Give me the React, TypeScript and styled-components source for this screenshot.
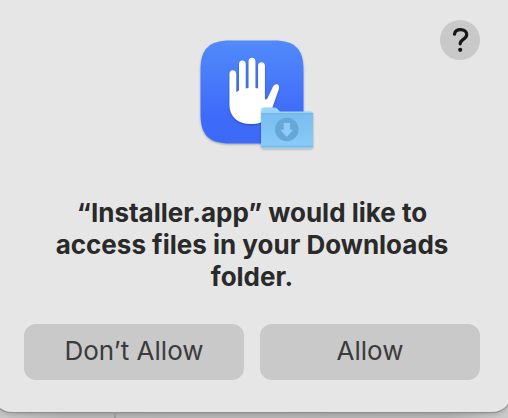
import React from "react";
import styled, { createGlobalStyle } from "styled-components";

const GlobalStyle = createGlobalStyle`
  * { box-sizing: border-box; }
  html, body, #root { height: 100%; }
  body {
    margin: 0;
    background: #b4b4b4;
    font-family: Inter, "Liberation Sans", sans-serif;
    overflow: hidden;
  }
`;

const Desktop = styled.main`
  display: flex;
  flex-direction: column;
  min-height: 100%;
  background: linear-gradient(90deg, #c6c6c6 0, #b6b6b6 60px, #b4b4b4 calc(100% - 60px), #cacaca 100%);
`;

const Dialog = styled.section`
  display: flex;
  flex-direction: column;
  margin: 0 -4px 0 -8px;
  padding: 20px 32px 32px;
  border-radius: 0 0 20px 20px;
  background: #e6e6e6;
  box-shadow: 0 0 0 1px #8e8e8e, 0 2px 4px rgba(0, 0, 0, 0.18);
`;

const Header = styled.header`
  display: grid;
  grid-template-columns: 1fr auto 1fr;
  align-items: start;
`;

const AppIcon = styled.svg`
  grid-column: 2;
  display: block;
  width: 120px;
  height: 120px;
  margin-top: 16px;
  overflow: visible;
`;

const HelpButton = styled.button`
  grid-column: 3;
  justify-self: end;
  display: flex;
  align-items: center;
  justify-content: center;
  width: 40px;
  height: 40px;
  padding: 0;
  border: 0;
  border-radius: 50%;
  background: #c9c9c9;
`;

const Message = styled.h1`
  margin: 41px 20px 31px;
  color: #2a2a2a;
  font-size: 26px;
  font-weight: 700;
  line-height: 32px;
  text-align: center;
`;

const Actions = styled.div`
  display: grid;
  grid-template-columns: 1fr 1fr;
  gap: 16px;
`;

const ActionButton = styled.button`
  height: 56px;
  padding: 0 12px 2px;
  border: 0;
  border-radius: 12px;
  background: #c9c9c9;
  color: #3b3b3b;
  font: 400 26px/32px Inter, "Liberation Sans", sans-serif;
`;

const Backdrop = styled.div`
  flex: 1;
  width: 116px;
  border-right: 2px solid #999;
`;

function PrivacyIcon() {
  return (
    <AppIcon viewBox="0 0 120 120" aria-hidden="true">
      <defs>
        <linearGradient id="tile" x1="0" y1="0" x2="0" y2="1">
          <stop offset="0" stopColor="#528afa" />
          <stop offset="0.75" stopColor="#3e6af8" />
          <stop offset="1" stopColor="#3e6af5" />
        </linearGradient>
        <linearGradient id="folder" x1="0" y1="0" x2="0" y2="1">
          <stop offset="0" stopColor="#78bdf0" />
          <stop offset="1" stopColor="#8bcbf8" />
        </linearGradient>
        <filter id="shadow" x="-10%" y="-10%" width="120%" height="125%">
          <feDropShadow dx="0" dy="1" stdDeviation="0.8" floodOpacity="0.3" />
        </filter>
      </defs>
      <path
        d="M38 4.500H82C103 4.500 111.500 13 111.500 34V78C111.500 99 103 107.500 82 107.500H38C17 107.500 8.500 99 8.500 78V34C8.500 13 17 4.500 38 4.500Z"
        fill="url(#tile)"
        filter="url(#shadow)"
      />
      <path
        filter="url(#shadow)"
        fill="#fff"
        d="M37.500 69V37.500C37.500 33 44.200 33 44.200 37.500V56Q45.500 55.500 47 54.500V27.800C47 23.300 53.700 23.300 53.700 27.800V52.600Q55 52 56.600 52V25C56.600 20.500 63.400 20.500 63.400 25V52Q64.700 52 66.100 52.500V29.500C66.100 25 72.900 25 72.900 29.500V63.500Q74.200 64 75.700 62L80.800 51C83.200 46.500 88.200 48 86.900 53L80.700 70.500C77.200 82 72.200 88 59.200 88C46.200 88 37.500 81 37.500 69Z"
      />
      <g filter="url(#shadow)">
        <path d="M69.200 74Q69.200 71.500 71.500 71.500H82Q84 71.500 85 72.500L88 75.500H119Q121 75.500 121 78V111H69.200Z" fill="#9ad6fc" />
        <path d="M69.200 77.500H121V110.500Q121 112.300 119 112.300H71.200Q69.200 112.300 69.200 110.500Z" fill="url(#folder)" />
        <path d="M69.200 77.500H121M69.200 110.300H121" stroke="#73b5e5" />
      </g>
      <circle cx="94.800" cy="93.500" r="11.800" fill="#65a8d8" />
      <path d="M91.700 87H98V93.700H101.200L94.800 101L88.300 93.700H91.700Z" fill="#8fcbf6" />
    </AppIcon>
  );
}

function HelpGlyph() {
  return (
    <svg width="40" height="40" viewBox="0 0 40 40" aria-hidden="true">
      <path
        d="M14.500 14.200C15 11 17.300 9.700 20.400 9.700C24.200 9.700 26.700 11.700 26.700 14.600C26.700 17.200 25 18.400 23 19.600C21 20.900 20.200 21.800 20.200 23.800"
        fill="none"
        stroke="#171717"
        strokeWidth="3.200"
        strokeLinecap="round"
      />
      <circle cx="20.200" cy="29.800" r="2.100" fill="#171717" />
    </svg>
  );
}

export default function App() {
  return (
    <>
      <GlobalStyle />
      <Desktop>
        <Dialog role="alertdialog" aria-labelledby="message">
          <Header>
            <PrivacyIcon />
            <HelpButton type="button" aria-label="Help">
              <HelpGlyph />
            </HelpButton>
          </Header>
          <Message id="message">
            “Installer.app” would like to access files in your Downloads folder.
          </Message>
          <Actions>
            <ActionButton type="button">Don’t Allow</ActionButton>
            <ActionButton type="button">Allow</ActionButton>
          </Actions>
        </Dialog>
        <Backdrop />
      </Desktop>
    </>
  );
}
